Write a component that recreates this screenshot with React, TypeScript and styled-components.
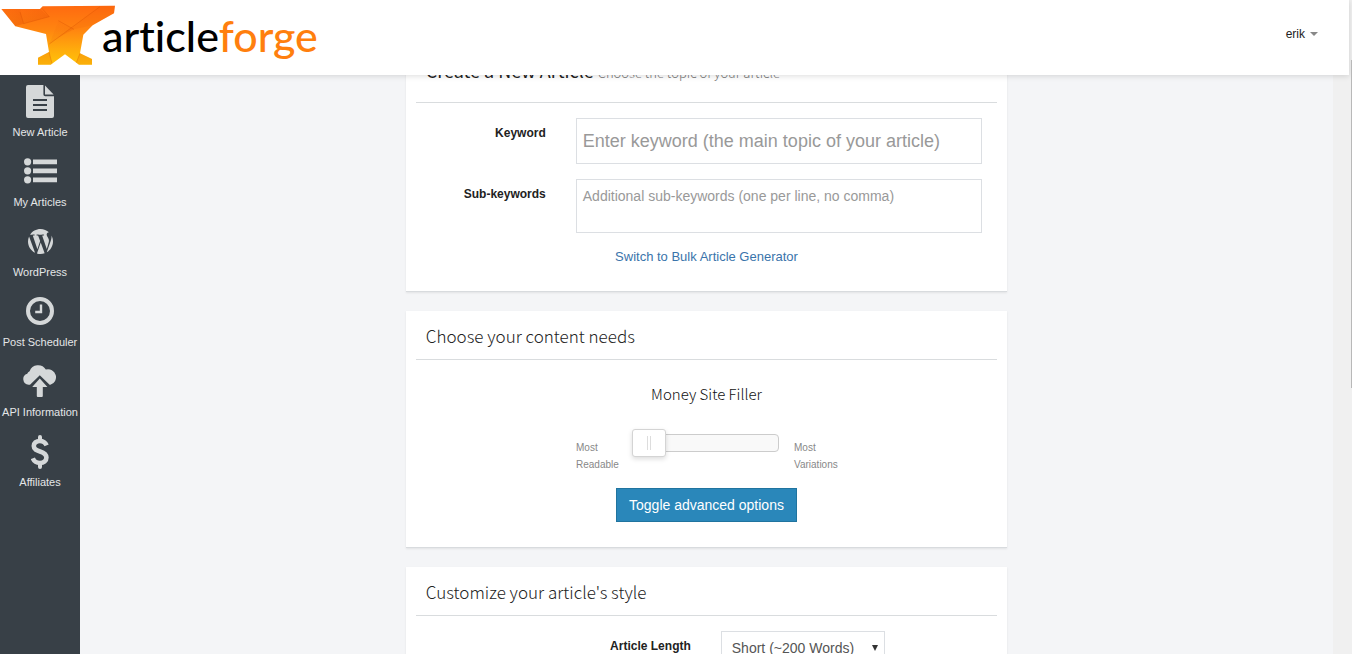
import React from "react";
import styled, { createGlobalStyle } from "styled-components";

const GlobalStyle = createGlobalStyle`
  *, *::before, *::after { box-sizing: border-box; }
  body {
    margin: 0;
    background: #f0f0f0;
    color: #222;
    font-family: "Liberation Sans", Arial, sans-serif;
    font-size: 13px;
  }
`;

const headingFont = `"Noto Sans CJK SC", "Noto Sans", sans-serif`;

const Page = styled.div`
  position: relative;
  display: flex;
  flex-direction: column;
  height: 100vh;
  overflow: hidden;
`;

const Header = styled.header`
  position: relative;
  z-index: 2;
  flex: none;
  display: flex;
  justify-content: space-between;
  align-items: center;
  height: 75px;
  margin-right: 3px;
  padding-right: 31px;
  background: #fff;
  box-shadow: 0 1px 6px rgba(0, 0, 0, 0.14);
`;

const Logo = styled.a`
  display: flex;
  align-items: center;
  align-self: flex-start;
  height: 72px;
  color: #000;
  font-family: Lato, sans-serif;
  font-size: 43px;
  font-weight: 500;
  font-variant-ligatures: none;
  line-height: 70px;
  text-decoration: none;
`;

const LogoAccent = styled.span`
  color: #ff7f0e;
`;

const UserMenu = styled.button`
  display: flex;
  align-items: center;
  gap: 5px;
  margin: 0 0 8px;
  padding: 0;
  border: 0;
  background: none;
  color: #222;
  font: 12px/20px "Liberation Sans", Arial, sans-serif;
`;

const Caret = styled.span`
  border: 4px solid transparent;
  border-top-color: #888;
  border-bottom: 0;
`;

const Body = styled.div`
  flex: 1;
  display: flex;
  min-height: 0;
  margin-right: 19px;
`;

const Sidebar = styled.nav`
  position: relative;
  z-index: 3;
  flex: none;
  width: 80px;
  padding-top: 5px;
  background: #384047;
`;

const NavItem = styled.a`
  display: flex;
  flex-direction: column;
  align-items: center;
  height: 70px;
  color: #e4e6e7;
  font-size: 11px;
  line-height: 14px;
  white-space: nowrap;
  text-decoration: none;
`;

const NavIcon = styled.span`
  display: flex;
  align-items: center;
  justify-content: center;
  height: 43px;
  margin-bottom: 2px;
  color: #d5d8d9;
`;

const Main = styled.main`
  flex: 1;
  min-width: 0;
  background: #f4f5f7;
`;

const Column = styled.div`
  display: flex;
  flex-direction: column;
  gap: 19px;
  width: 48%;
  min-width: 600px;
  margin: -21px auto 0;
`;

const Card = styled.section`
  padding: 0 10px 25px;
  border-bottom: 1px solid #d8dbde;
  background: #fff;
  box-shadow: 0 1px 2px rgba(0, 0, 0, 0.08);
`;

const CardTitle = styled.h2`
  height: 49px;
  margin: 0 0 15px;
  padding: 0 10px;
  border-bottom: 1px solid #d9dcde;
  color: #222;
  font-family: ${headingFont};
  font-size: 17px;
  font-weight: 300;
  line-height: 50px;
`;

const PageTitle = styled(CardTitle)`
  font-size: 18px;
  font-weight: 400;
  line-height: 32px;
`;

const TitleNote = styled.small`
  color: #777;
  font-size: 13px;
  font-weight: 300;
`;

const FormRow = styled.div<{ $label: number }>`
  display: grid;
  grid-template-columns: ${(p) => p.$label}px 1fr;
  column-gap: 30px;
  margin: 0 15px 15px 0;
`;

const Label = styled.label`
  padding-top: 7px;
  color: #222;
  font-size: 12px;
  font-weight: 700;
  line-height: 16px;
  text-align: right;
`;

const KeywordInput = styled.input`
  width: 100%;
  height: 46px;
  padding: 0 6px;
  border: 1px solid #dcdfe3;
  border-radius: 0;
  background: #fff;
  font: 18px "Liberation Sans", Arial, sans-serif;
  &::placeholder { color: #999; }
`;

const SubKeywords = styled.textarea`
  display: block;
  width: 100%;
  height: 54px;
  padding: 6px;
  border: 1px solid #dcdfe3;
  border-radius: 0;
  background: #fff;
  font: 14px/20px "Liberation Sans", Arial, sans-serif;
  resize: none;
  &::placeholder { color: #999; }
`;

const Centered = styled.div`
  display: flex;
  justify-content: center;
`;

const BulkLink = styled.a`
  color: #3a74ab;
  font-size: 13px;
  line-height: 18px;
  text-decoration: none;
`;

const NeedTitle = styled.h3`
  margin: 0;
  color: #111;
  font-family: ${headingFont};
  font-size: 15px;
  font-weight: 300;
  line-height: 38px;
  text-align: center;
`;

const SliderRow = styled.div`
  display: grid;
  grid-template-columns: 56px 147px 58px;
  justify-content: center;
  margin: 15px 0;
`;

const SliderLabel = styled.label`
  padding-top: 11px;
  color: #888;
  font-size: 10px;
  line-height: 17px;
`;

const SliderLabelEnd = styled(SliderLabel)`
  padding-left: 15px;
`;

const Slider = styled.input`
  appearance: none;
  width: 147px;
  height: 29px;
  margin: 0;
  background: none;
  &::-webkit-slider-runnable-track {
    height: 18px;
    border: 1px solid #ccc;
    border-radius: 4px;
    background: #f9f9f9;
  }
  &::-webkit-slider-thumb {
    appearance: none;
    width: 34px;
    height: 28px;
    margin: -6px 0 0 -1px;
    border: 1px solid #d4d4d4;
    border-radius: 3px;
    background:
      linear-gradient(#ddd, #ddd) 14px 6px / 1px 14px no-repeat,
      linear-gradient(#ddd, #ddd) 17px 6px / 1px 14px no-repeat,
      #fff;
    box-shadow: 0 2px 5px rgba(0, 0, 0, 0.14);
  }
`;

const ToggleButton = styled.button`
  height: 34px;
  padding: 0 12px;
  border: 1px solid #20749f;
  background: #2a87ba;
  color: #fff;
  font: 14px "Liberation Sans", Arial, sans-serif;
`;

const SelectBox = styled.div`
  position: relative;
  width: 164px;
`;

const Select = styled.select`
  appearance: none;
  width: 100%;
  height: 34px;
  padding: 0 24px 0 10px;
  border: 1px solid #dcdfe3;
  border-radius: 0;
  background: #fff;
  color: #555;
  font: 14px "Liberation Sans", Arial, sans-serif;
`;

const SelectArrow = styled.span`
  position: absolute;
  top: 14px;
  right: 7px;
  border: 3px solid transparent;
  border-top: 6px solid #333;
  border-bottom: 0;
  pointer-events: none;
`;

const ScrollThumb = styled.div`
  position: absolute;
  z-index: 4;
  top: 60px;
  right: 0;
  width: 1px;
  height: 328px;
  background: #b8b8b8;
`;

const Anvil = () => (
  <svg width="102" height="72" viewBox="0 0 306 216" style={{ overflow: "visible" }} aria-hidden="true">
    <defs>
      <linearGradient id="flame" x1="0" y1="17" x2="0" y2="194" gradientUnits="userSpaceOnUse">
        <stop offset="0" stopColor="#ff6a10" />
        <stop offset="0.4" stopColor="#ff8410" />
        <stop offset="0.75" stopColor="#ffac0c" />
        <stop offset="1" stopColor="#ffc40a" />
      </linearGradient>
      <linearGradient id="crease" x1="0" y1="0" x2="1" y2="1">
        <stop offset="0" stopColor="#e04c04" stopOpacity="0" />
        <stop offset="1" stopColor="#e04c04" stopOpacity="0.4" />
      </linearGradient>
    </defs>
    <path fill="url(#flame)" d="M4 27H120L128 19L345 17L342 40L278 76L250 104L240 160L276 177V194H237L195 163L152 194H114V173L147 156L138 102L46 79Z" />
    <path fill="url(#crease)" d="M4 27H60L71 71L46 79Z" />
    <path fill="url(#crease)" d="M60 27H120L148 50L71 71Z" />
    <path fill="url(#crease)" d="M175 62L222 88L200 98L148 132Z" opacity="0.5" />
    <path fill="#e04c04" opacity="0.1" d="M300 18L345 17L342 40L278 76L222 88L175 112Z" />
    <path fill="#e04c04" opacity="0.16" d="M147 156L156 192L152 194H114V173ZM240 160L229 188L237 194H276V177Z" />
    <path fill="none" stroke="#d85004" strokeOpacity="0.5" strokeWidth="2" d="M60 36L71 71L148 50L125 24M300 20L148 132M175 62L222 88M240 160L229 188M147 156L156 190" />
  </svg>
);

const FileIcon = () => (
  <svg width="28" height="33" viewBox="0 0 28 33" fill="currentColor" aria-hidden="true">
    <path fillRule="evenodd" d="M2 0H17.4V9.5Q17.4 11.3 19.2 11.3H28V31Q28 33 26 33H2Q0 33 0 31V2Q0 0 2 0ZM7 14V16H21V14ZM7 19V21H21V19ZM7 24V26H21V24Z" />
    <path d="M19 .6L27.6 9.6H19Z" />
  </svg>
);

const ListIcon = () => (
  <svg width="33" height="27" viewBox="0 0 33 27" fill="currentColor" aria-hidden="true">
    <circle cx="3.6" cy="3.8" r="3.6" />
    <circle cx="3.6" cy="12.8" r="3.6" />
    <circle cx="3.6" cy="21.8" r="3.6" />
    <path d="M9 1.4H33V6.2H9ZM9 10.4H33V15.2H9ZM9 19.4H33V24.2H9Z" />
  </svg>
);

const WordPressIcon = () => (
  <svg width="25" height="25" viewBox="33 33 446 446" fill="currentColor" aria-hidden="true">
    <path d="M33 256c0-32.3 6.9-63 19.3-90.7l106.4 291.4C84.3 420.5 33 344.2 33 256zm223 223c-21.9 0-43-3.2-63-9.1l66.9-194.4 68.5 187.8c.5 1.1 1 2.1 1.6 3.1-23.1 8.1-48 12.6-74 12.6zm30.7-327.5c13.4-.7 25.5-2.1 25.5-2.1 12-1.4 10.6-19.1-1.4-18.4 0 0-36.1 2.8-59.4 2.8-21.9 0-58.7-2.8-58.7-2.8-12-.7-13.4 17.7-1.4 18.4 0 0 11.4 1.4 23.4 2.1l34.7 95.2L200.6 393l-81.2-241.5c13.4-.7 25.5-2.1 25.5-2.1 12-1.4 10.6-19.1-1.4-18.4 0 0-36.1 2.8-59.4 2.8-4.2 0-9.1-.1-14.4-.3C109.6 73 178.1 33 256 33c58 0 110.9 22.2 150.6 58.5-1-.1-1.9-.2-2.9-.2-21.9 0-37.4 19.1-37.4 39.6 0 18.4 10.6 33.9 21.9 52.3 8.5 14.8 18.4 33.9 18.4 61.5 0 19.1-7.3 41.2-17 72.1l-22.2 74.3-80.7-239.6zm81.4 297.2l68.1-196.9c12.7-31.8 17-57.2 17-79.9 0-8.2-.5-15.8-1.5-22.9 17.4 31.8 27.3 68.2 27.3 107 0 82.3-44.6 154.1-110.9 192.7z" />
  </svg>
);

const ClockIcon = () => (
  <svg width="28" height="29" viewBox="0 0 28 29" fill="none" stroke="currentColor" aria-hidden="true">
    <circle cx="14" cy="14" r="12" strokeWidth="4" />
    <path d="M15 7.5V15H9.2" strokeWidth="2.4" />
  </svg>
);

const CloudIcon = () => (
  <svg width="34" height="33" viewBox="0 0 34 33" fill="currentColor" aria-hidden="true">
    <path d="M5.6 19.8A5.7 5.7 0 0 1 4.2 8.7A5 5 0 0 1 6.6 6.2A9 9 0 0 1 22.8 4.6A7.8 7.8 0 1 1 27.4 19.8H26.6L16.8 10.2L7 19.8Z" />
    <path d="M16.8 13.4L24.4 22H19.8V31Q19.8 32 18.8 32H14.8Q13.8 32 13.8 31V22H9.2Z" />
  </svg>
);

const DollarIcon = () => (
  <svg width="18" height="34" viewBox="0 0 18 34" fill="none" stroke="currentColor" aria-hidden="true">
    <path d="M9 2V6M9 28V32" strokeWidth="4" strokeLinecap="round" />
    <path d="M15.6 10.4C14.4 7.6 12 6 8.8 6C5.2 6 2.8 8 2.8 11C2.8 14.4 5.6 15.4 9 16.5C12.8 17.7 15.4 19 15.4 22.6C15.4 26 12.8 28 9 28C5.6 28 3 26.4 1.8 23.2" strokeWidth="4.6" />
  </svg>
);

const navItems = [
  { label: "New Article", icon: <FileIcon /> },
  { label: "My Articles", icon: <ListIcon /> },
  { label: "WordPress", icon: <WordPressIcon /> },
  { label: "Post Scheduler", icon: <ClockIcon /> },
  { label: "API Information", icon: <CloudIcon /> },
  { label: "Affiliates", icon: <DollarIcon /> },
];

export default function App() {
  return (
    <>
      <GlobalStyle />
      <Page>
        <Header>
          <Logo href="#">
            <Anvil />
            <span>article<LogoAccent>forge</LogoAccent></span>
          </Logo>
          <UserMenu type="button">
            erik
            <Caret />
          </UserMenu>
        </Header>
        <Body>
          <Sidebar>
            {navItems.map((item) => (
              <NavItem href="#" key={item.label}>
                <NavIcon>{item.icon}</NavIcon>
                {item.label}
              </NavItem>
            ))}
          </Sidebar>
          <Main>
            <Column>
              <Card>
                <PageTitle>
                  Create a New Article <TitleNote>Choose the topic of your article</TitleNote>
                </PageTitle>
                <FormRow $label={130}>
                  <Label htmlFor="keyword">Keyword</Label>
                  <KeywordInput id="keyword" placeholder="Enter keyword (the main topic of your article)" />
                </FormRow>
                <FormRow $label={130}>
                  <Label htmlFor="sub-keywords">Sub-keywords</Label>
                  <SubKeywords id="sub-keywords" placeholder="Additional sub-keywords (one per line, no comma)" />
                </FormRow>
                <Centered>
                  <BulkLink href="#">Switch to Bulk Article Generator</BulkLink>
                </Centered>
              </Card>
              <Card>
                <CardTitle>Choose your content needs</CardTitle>
                <NeedTitle>Money Site Filler</NeedTitle>
                <SliderRow>
                  <SliderLabel htmlFor="variation">Most<br />Readable</SliderLabel>
                  <Slider id="variation" type="range" min={0} max={4} defaultValue={0} />
                  <SliderLabelEnd htmlFor="variation">Most<br />Variations</SliderLabelEnd>
                </SliderRow>
                <Centered>
                  <ToggleButton type="button">Toggle advanced options</ToggleButton>
                </Centered>
              </Card>
              <Card>
                <CardTitle>Customize your article's style</CardTitle>
                <FormRow $label={275}>
                  <Label htmlFor="length">Article Length</Label>
                  <SelectBox>
                    <Select id="length" defaultValue="short">
                      <option value="short">Short (~200 Words)</option>
                    </Select>
                    <SelectArrow />
                  </SelectBox>
                </FormRow>
              </Card>
            </Column>
          </Main>
        </Body>
        <ScrollThumb />
      </Page>
    </>
  );
}
